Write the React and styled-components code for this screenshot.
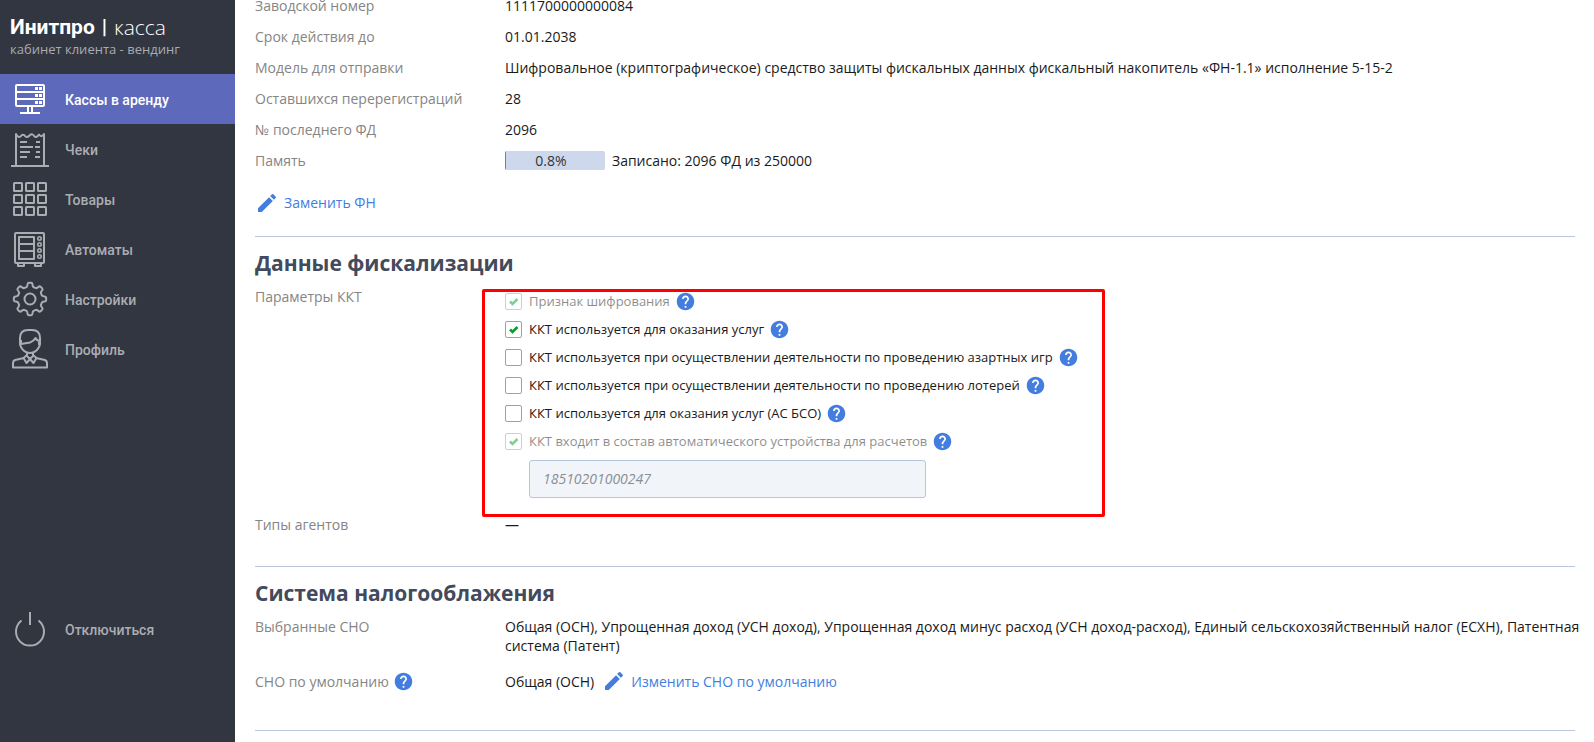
import React, { useState } from "react";
import styled, { createGlobalStyle } from "styled-components";
import { MdEdit, MdHelp } from "react-icons/md";

const GlobalStyle = createGlobalStyle`
  * {
    box-sizing: border-box;
  }
  body {
    margin: 0;
    background: #fff;
    color: #1a1a1a;
    font-family: "Open Sans", "Noto Sans", sans-serif;
    font-size: 14px;
    line-height: 19px;
  }
`;

const Page = styled.div`
  display: flex;
  min-height: 100vh;
`;

const Sidebar = styled.aside`
  display: flex;
  flex-direction: column;
  flex: none;
  width: 235px;
  padding-bottom: 88px;
  background: #323641;
`;

const Brand = styled.div`
  height: 74px;
  padding: 14px 10px 0;
`;

const BrandName = styled.div`
  display: flex;
  gap: 7px;
  color: #fff;
  font-family: Roboto, sans-serif;
  font-size: 21px;
  font-weight: 700;
  line-height: 26px;
`;

const BrandProduct = styled.span`
  font-family: "Open Sans", sans-serif;
  font-weight: 300;
`;

const BrandNote = styled.div`
  color: #a9abb0;
  font-size: 13px;
  line-height: 18px;
`;

const NavLink = styled.a`
  display: flex;
  align-items: center;
  gap: 5px;
  height: 50px;
  color: ${(props) => (props.$active ? "#fff" : "#abadb2")};
  background: ${(props) => (props.$active ? "#5d6abc" : "transparent")};
  font-family: Roboto, sans-serif;
  font-weight: 500;
  line-height: 20px;
  text-decoration: none;
`;

const NavText = styled.span`
  padding-top: 2px;
`;

const LogoutLink = styled(NavLink)`
  margin-top: auto;
`;

const NavSvg = styled.svg`
  flex: none;
  width: 60px;
  height: 50px;
  fill: none;
  stroke: currentColor;
  stroke-width: 2;
  stroke-linejoin: round;
`;

const Main = styled.main`
  flex: 1;
  min-width: 0;
  padding: 0 19px 0 20px;
`;

const Section = styled.section`
  padding-bottom: ${(props) => props.$bottom || 20}px;
  border-bottom: 1px solid #b9c6de;
`;

/* the first section continues from above the top edge of the window */
const FirstSection = styled(Section)`
  margin-top: -4px;
`;

const Title = styled.h2`
  margin: 0;
  padding: 12px 0 10px;
  color: #434a5c;
  font-size: 21px;
  font-weight: 700;
  line-height: 28px;
`;

const Row = styled.div`
  display: grid;
  grid-template-columns: 250px minmax(0, 1fr);
  margin: 0 -8px ${(props) => props.$gap || 12}px 0;
`;

const RowLabel = styled.div`
  display: flex;
  align-items: center;
  align-self: start;
  gap: 4px;
  height: 19px;
  color: #858585;
`;

const RowValue = styled.div`
  display: flex;
  align-items: center;
`;

const RowText = styled.div``;

const Meter = styled.div`
  position: relative;
  width: 100px;
  height: 19px;
  margin-right: 7px;
  padding-right: 8px;
  overflow: hidden;
  border-radius: 2px;
  background: #cdd8ec;
  color: #333;
  text-align: center;
`;

const MeterFill = styled.div`
  position: absolute;
  top: 0;
  left: 0;
  height: 100%;
  background: #26a69a;
`;

const ActionLink = styled.a`
  display: inline-flex;
  align-items: center;
  gap: 5px;
  height: 19px;
  color: #437ddf;
  text-decoration: none;
  svg {
    flex: none;
    width: 24px;
    height: 24px;
  }
`;

const ActionBar = styled.div`
  padding-top: 11px;
`;

const InlineAction = styled.span`
  display: inline-flex;
  margin-left: 8px;
`;

const HelpButton = styled.button`
  display: block;
  flex: none;
  width: 21px;
  height: 21px;
  padding: 0;
  border: 0;
  background: none;
  color: #437ddf;
  cursor: pointer;
  svg {
    display: block;
    width: 21px;
    height: 21px;
  }
`;

const Options = styled.div`
  position: relative;
  width: fit-content;
  padding-top: 1px;
`;

const Highlight = styled.div`
  position: absolute;
  inset: 2px -26px -19px -23px;
  border: 3px solid #f00;
  border-radius: 2px;
  pointer-events: none;
`;

const Option = styled.div`
  display: flex;
  align-items: center;
  gap: 5px;
  height: 28px;
`;

const OptionLabel = styled.label`
  display: flex;
  align-items: center;
  gap: 7px;
  font-size: 13px;
  opacity: ${(props) => (props.$disabled ? 0.5 : 1)};
`;

const Box = styled.span`
  position: relative;
  display: block;
  width: 17px;
  height: 17px;
`;

const BoxInput = styled.input`
  display: block;
  appearance: none;
  width: 17px;
  height: 17px;
  margin: 0;
  border: 1px solid #8fa3c8;
  border-radius: 2px;
  background: #fff;
`;

const Tick = styled.svg`
  position: absolute;
  inset: 0;
  fill: none;
  stroke: #0a9e2a;
  stroke-width: 2.6;
  pointer-events: none;
`;

const DeviceInput = styled.input`
  display: block;
  width: 397px;
  height: 38px;
  margin: 4px 0 0 24px;
  padding: 0 13px;
  border: 1px solid #b5c6dc;
  border-radius: 3px;
  background: #f1f5fa;
  color: #8b8e94;
  font: italic 14px "Open Sans", sans-serif;
`;

const gearPath = Array.from({ length: 8 }, (_, i) => {
  const point = (r, deg) => {
    const a = ((i * 45 + deg - 90) * Math.PI) / 180;
    return `${(30 + r * Math.cos(a)).toFixed(2)} ${(25 + r * Math.sin(a)).toFixed(2)}`;
  };
  return `${i ? "L" : "M"}${point(12.4, -16)}Q${point(13.2, -11)} ${point(14.6, -10)}Q${point(16.2, -9)} ${point(16.2, -4)}L${point(16.2, 4)}Q${point(16.2, 9)} ${point(14.6, 10)}Q${point(13.2, 11)} ${point(12.4, 16)}`;
}).join("") + "Z";

const icons = {
  server: (
    <>
      <rect x="16" y="11" width="28" height="21" rx="1" />
      <path d="M16 18H44M16 25H44M28 33V39M32 33V39M20 39H40" />
      <path d="M35 14.5h3M39 14.5h3M35 21.5h3M39 21.5h3M35 28.5h3M39 28.5h3" strokeWidth="3" />
    </>
  ),
  receipt: (
    <>
      <path d="M16 42V10Q18 14 20.5 12.500Q23 9 25.500 12.500Q27.500 14 30 11Q32.500 9 34.500 12.500Q36.500 14 39 10.500Q41.500 14 44 10V42" />
      <path d="M11 42H49M20 18h7M20 23h13M20 28h10M20 33h7M36 18h4M35 23h5M36 28h4M35 33h5" />
    </>
  ),
  goods: [9, 21, 33].map((y) =>
    [14, 26, 38].map((x) => <rect key={`${x}-${y}`} x={x} y={y} width="8" height="8" rx="0.5" />)
  ),
  machine: (
    <>
      <rect x="15" y="9" width="29" height="30" rx="1" />
      <rect x="19" y="13" width="15" height="22" />
      <path d="M19 20H34M19 27H34M18 39V42H24V39M35 39V42H41V39" />
      {[14.5, 20.5, 26.5, 32.5].map((y) => (
        <circle key={y} cx="39.500" cy={y} r="1.700" strokeWidth="1.600" />
      ))}
    </>
  ),
  gear: (
    <>
      <path d={gearPath} />
      <circle cx="30" cy="25" r="5.500" />
    </>
  ),
  person: (
    <>
      <path d="M20 20V14Q20 6 28 6H32Q40 6 40 14V20Q40 21 39 23Q36 29 30 29Q24 29 21 23Q20 21 20 20Z" />
      <path d="M21 20Q27 19 30 18.500Q34 17 35.500 14Q37 17 40 17M21 16V21M39 18V21" />
      <path d="M27 28V32L30 35L33 32V28" />
      <path d="M27 31L23.500 34L26.500 39L30 35L33.500 39L36.500 34L33 31" />
      <path d="M24 34L15 36Q13 37 13 39V43.500H47V39Q47 37 45 36L36 34" />
    </>
  ),
  power: (
    <path d="M30 8V21M21.500 16.500A14 14 0 1 0 38.500 16.500" />
  ),
};

const NavIcon = ({ name }) => (
  <NavSvg viewBox="0 0 60 50" aria-hidden="true">
    {icons[name]}
  </NavSvg>
);

const navItems = [
  { icon: "server", text: "Кассы в аренду", active: true },
  { icon: "receipt", text: "Чеки" },
  { icon: "goods", text: "Товары" },
  { icon: "machine", text: "Автоматы" },
  { icon: "gear", text: "Настройки" },
  { icon: "person", text: "Профиль" },
];

const driveRows = [
  ["Заводской номер", "1111700000000084"],
  ["Срок действия до", "01.01.2038"],
  [
    "Модель для отправки",
    "Шифровальное (криптографическое) средство защиты фискальных данных фискальный накопитель «ФН-1.1» исполнение 5-15-2",
  ],
  ["Оставшихся перерегистраций", "28"],
  ["№ последнего ФД", "2096"],
];

const options = [
  { id: "encryption", text: "Признак шифрования", checked: true, disabled: true },
  { id: "services", text: "ККТ используется для оказания услуг", checked: true },
  { id: "gambling", text: "ККТ используется при осуществлении деятельности по проведению азартных игр" },
  { id: "lottery", text: "ККТ используется при осуществлении деятельности по проведению лотерей" },
  { id: "bso", text: "ККТ используется для оказания услуг (АС БСО)" },
  { id: "automatic", text: "ККТ входит в состав автоматического устройства для расчетов", checked: true, disabled: true },
];

const Help = () => (
  <HelpButton type="button" aria-label="Справка">
    <MdHelp />
  </HelpButton>
);

function Field({ label, help, gap, children }) {
  return (
    <Row $gap={gap}>
      <RowLabel>
        {label}
        {help && <Help />}
      </RowLabel>
      {children}
    </Row>
  );
}

function CheckOption({ option }) {
  const [checked, setChecked] = useState(Boolean(option.checked));
  return (
    <Option>
      <OptionLabel htmlFor={option.id} $disabled={option.disabled}>
        <Box>
          <BoxInput
            type="checkbox"
            id={option.id}
            checked={checked}
            disabled={option.disabled}
            onChange={(e) => setChecked(e.target.checked)}
          />
          {checked && (
            <Tick viewBox="0 0 17 17">
              <path d="M5 8.500L7.500 11L12.500 6" />
            </Tick>
          )}
        </Box>
        {option.text}
      </OptionLabel>
      <Help />
    </Option>
  );
}

export default function App() {
  const memory = 0.8;

  return (
    <Page>
      <GlobalStyle />
      <Sidebar>
        <Brand>
          <BrandName>
            <span>Инитпро</span>
            <span>|</span>
            <BrandProduct>касса</BrandProduct>
          </BrandName>
          <BrandNote>кабинет клиента - вендинг</BrandNote>
        </Brand>
        <nav>
          {navItems.map((item) => (
            <NavLink key={item.icon} href="#" $active={item.active}>
              <NavIcon name={item.icon} />
              <NavText>{item.text}</NavText>
            </NavLink>
          ))}
        </nav>
        <LogoutLink href="#">
          <NavIcon name="power" />
          <NavText>Отключиться</NavText>
        </LogoutLink>
      </Sidebar>

      <Main>
        <FirstSection $bottom={17}>
          {driveRows.map(([label, value]) => (
            <Field key={label} label={label}>
              <RowText>{value}</RowText>
            </Field>
          ))}
          <Field label="Память">
            <RowValue>
              <Meter>
                <MeterFill style={{ width: `${memory}%` }} />
                {memory}%
              </Meter>
              Записано: 2096 ФД из 250000
            </RowValue>
          </Field>
          <ActionBar>
            <ActionLink href="#">
              <MdEdit />
              Заменить ФН
            </ActionLink>
          </ActionBar>
        </FirstSection>

        <Section>
          <Title>Данные фискализации</Title>
          <Field label="Параметры ККТ" gap={17}>
            <Options>
              {options.map((option) => (
                <CheckOption key={option.id} option={option} />
              ))}
              <DeviceInput defaultValue="18510201000247" disabled aria-label="Номер автоматического устройства" />
              <Highlight />
            </Options>
          </Field>
          <Field label="Типы агентов">
            <RowText>—</RowText>
          </Field>
        </Section>

        <Section $bottom={27}>
          <Title>Система налогооблажения</Title>
          <Field label="Выбранные СНО" gap={17}>
            <RowText>
              Общая (ОСН), Упрощенная доход (УСН доход), Упрощенная доход минус расход (УСН доход-расход), Единый
              сельскохозяйственный налог (ЕСХН), Патентная система (Патент)
            </RowText>
          </Field>
          <Field label="СНО по умолчанию" help>
            <RowValue>
              Общая (ОСН)
              <InlineAction>
                <ActionLink href="#">
                  <MdEdit />
                  Изменить СНО по умолчанию
                </ActionLink>
              </InlineAction>
            </RowValue>
          </Field>
        </Section>
      </Main>
    </Page>
  );
}
